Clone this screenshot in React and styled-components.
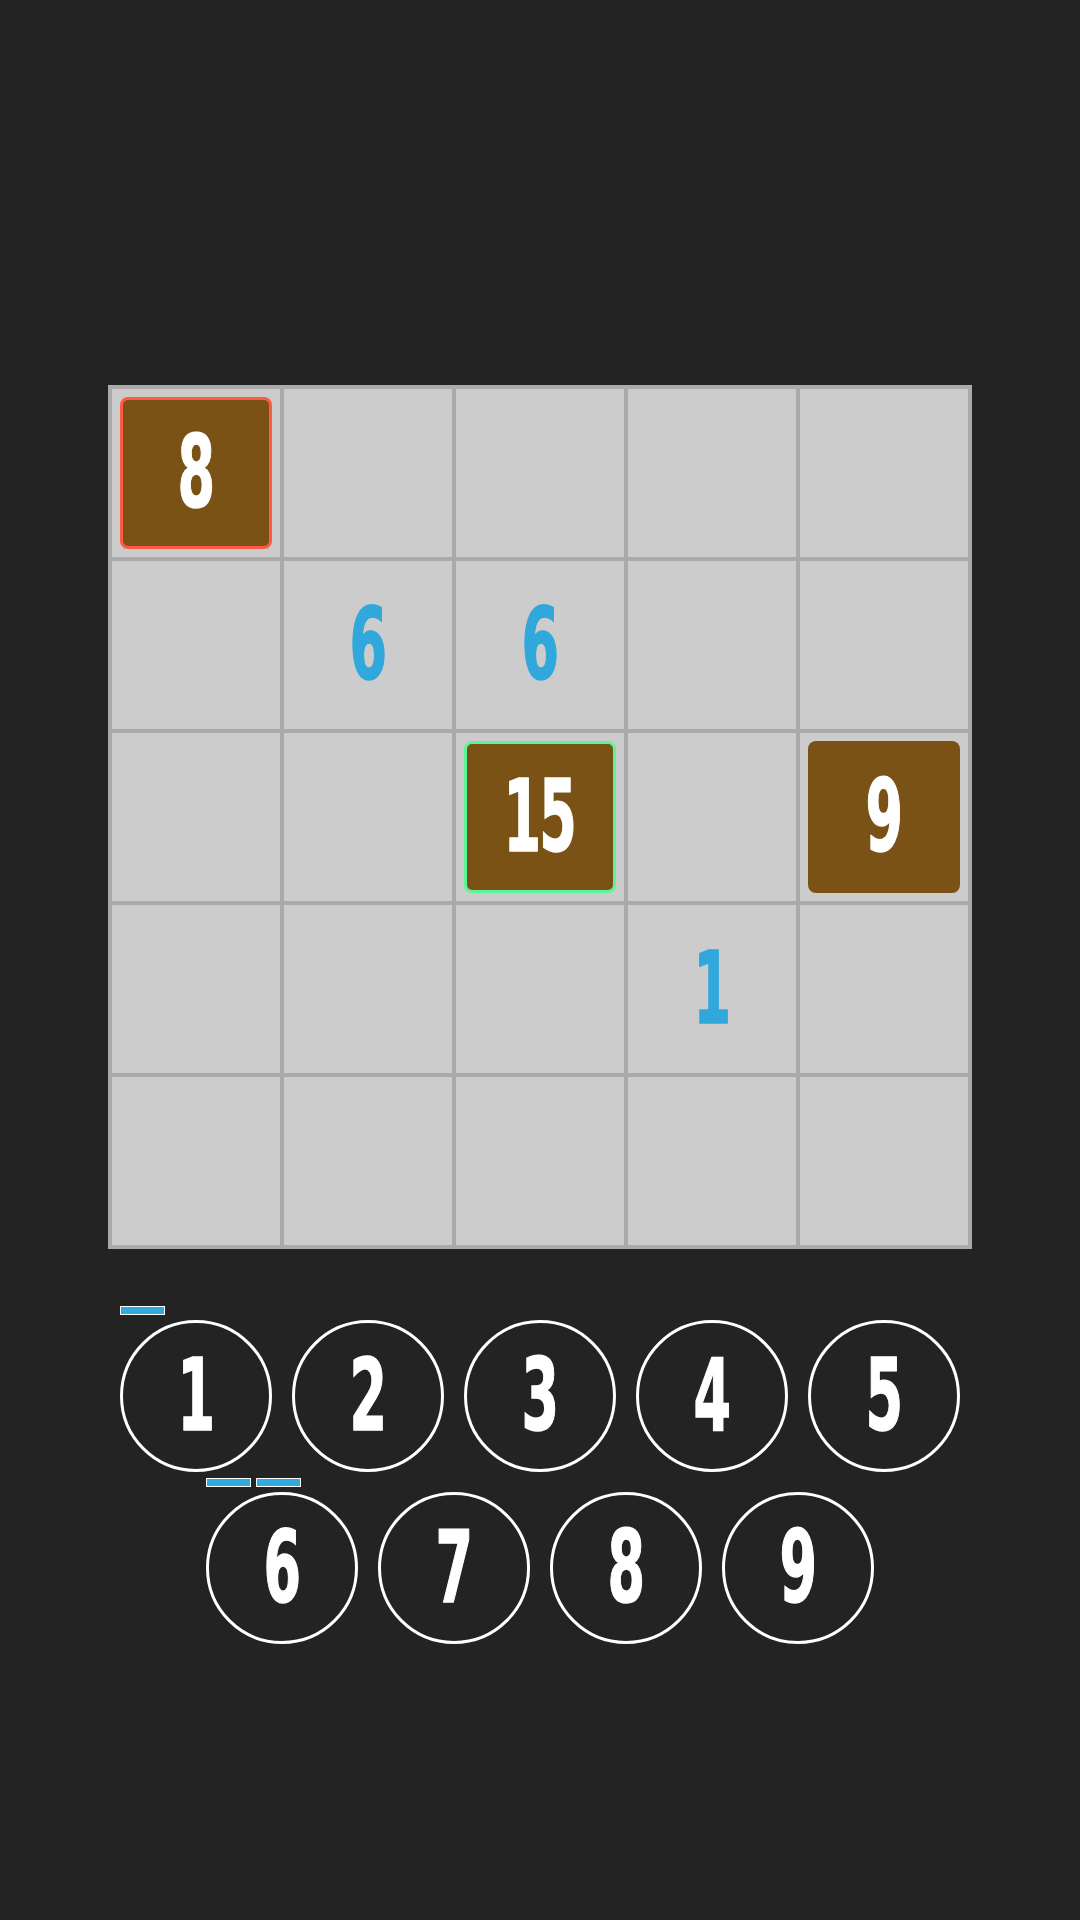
import React from 'react'
import styled, { createGlobalStyle } from 'styled-components'

const GlobalStyle = createGlobalStyle`
  html, body {
    margin: 0;
    padding: 0;
    background: #232323;
  }
  body {
    width: 1080px;
    min-height: 1920px;
    font-family: "DejaVu Sans Condensed", "Liberation Sans", sans-serif;
  }
`

// board: null = empty, {v, tile, ring} for placed numbers, {v} for pencil hints
const board = [
  [{ v: 8, tile: true, ring: '#ff5a45' }, null, null, null, null],
  [null, { v: 6 }, { v: 6 }, null, null],
  [null, null, { v: 15, tile: true, ring: '#5cf598' }, null, { v: 9, tile: true }],
  [null, null, null, { v: 1 }, null],
  [null, null, null, null, null],
]

const keys = [
  [{ n: 1, bars: 1 }, { n: 2 }, { n: 3 }, { n: 4 }, { n: 5 }],
  [{ n: 6, bars: 2 }, { n: 7 }, { n: 8 }, { n: 9 }],
]

function App() {
  return (
    <Page>
      <GlobalStyle />
      <Board>
        {board.map((row, r) =>
          row.map((cell, c) => (
            <Cell key={r + '-' + c}>
              {cell && cell.tile && (
                <Tile $ring={cell.ring}>
                  <Digit>{cell.v}</Digit>
                </Tile>
              )}
              {cell && !cell.tile && <Digit $blue>{cell.v}</Digit>}
            </Cell>
          ))
        )}
      </Board>
      <Keypad>
        {keys.map((row, i) => (
          <KeyRow key={i}>
            {row.map((k) => (
              <Key key={k.n}>
                <Bars>
                  {Array.from({ length: k.bars || 0 }).map((_, j) => (
                    <Bar key={j} />
                  ))}
                </Bars>
                <Circle>
                  <Digit>{k.n}</Digit>
                </Circle>
              </Key>
            ))}
          </KeyRow>
        ))}
      </Keypad>
    </Page>
  )
}

export default App

const Page = styled.div`
  display: flex;
  flex-direction: column;
  align-items: center;
  padding-top: 385px;
`
const Board = styled.div`
  display: grid;
  grid-template-columns: repeat(5, 172px);
  grid-auto-rows: 172px;
  border: 2px solid #aaaaaa;
  background: #cccccc;
`
const Cell = styled.div`
  box-sizing: border-box;
  border: 2px solid #aaaaaa;
  display: flex;
  align-items: center;
  justify-content: center;
`
const Tile = styled.div`
  box-sizing: border-box;
  width: 152px;
  height: 152px;
  border-radius: 8px;
  background: #7a5215;
  border: ${(p) => (p.$ring ? `3px solid ${p.$ring}` : 'none')};
  display: flex;
  align-items: center;
  justify-content: center;
`
const Digit = styled.span`
  display: inline-block;
  font-family: "DejaVu Sans Condensed", "Liberation Sans", sans-serif;
  font-weight: 700;
  font-size: 100px;
  line-height: 1;
  letter-spacing: -3px;
  padding-right: 3px;
  color: ${(p) => (p.$blue ? '#30a8dc' : '#ffffff')};
  -webkit-text-stroke: 1.5px ${(p) => (p.$blue ? '#30a8dc' : '#ffffff')};
  transform: scaleX(0.6);
`
const Keypad = styled.div`
  margin-top: 57px;
  display: flex;
  flex-direction: column;
  align-items: center;
  gap: 6px;
`
const KeyRow = styled.div`
  display: flex;
  justify-content: center;
`
const Key = styled.div`
  width: 172px;
  box-sizing: border-box;
  padding: 0 10px;
  display: flex;
  flex-direction: column;
  gap: 5px;
`
const Bars = styled.div`
  display: flex;
  gap: 5px;
  height: 9px;
`
const Bar = styled.div`
  box-sizing: border-box;
  width: 45px;
  height: 9px;
  background: #33aadd;
  border: 1px solid #ffffff;
`
const Circle = styled.div`
  box-sizing: border-box;
  width: 152px;
  height: 152px;
  border-radius: 50%;
  border: 3px solid #ffffff;
  display: flex;
  align-items: center;
  justify-content: center;
`
